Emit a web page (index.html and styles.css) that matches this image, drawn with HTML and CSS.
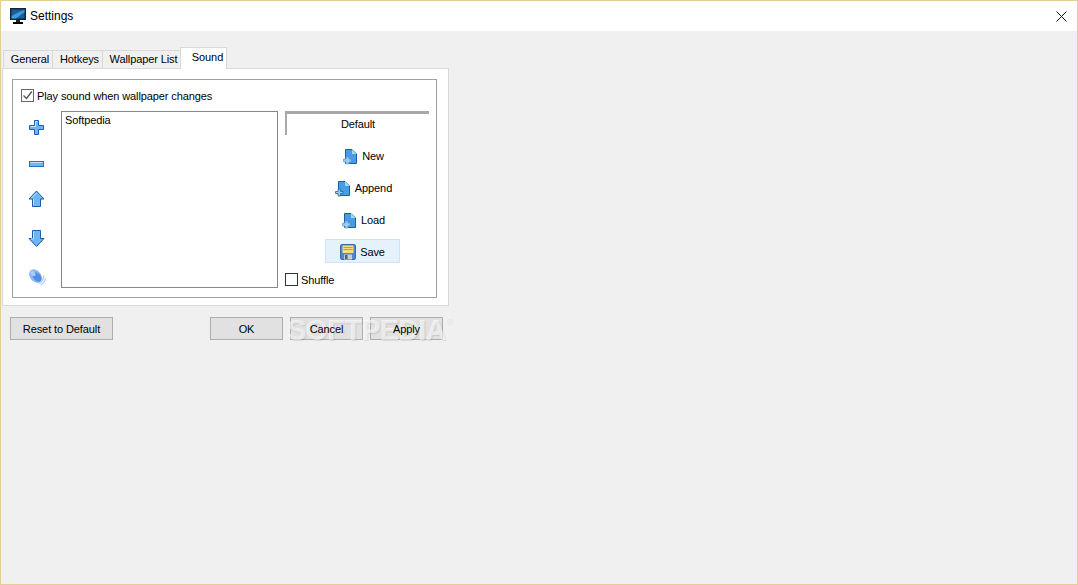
FILE: index.html
```html
<!DOCTYPE html>
<html lang="en">
<head>
<meta charset="utf-8">
<title>Settings</title>
<link rel="stylesheet" href="styles.css">
</head>
<body>
<div class="window">
  <header class="titlebar">
    <svg class="app-icon" width="16" height="16" viewBox="0 0 16 16">
      <rect x="0" y="0" width="16" height="12" fill="#12263e"/>
      <rect x="1.500" y="1.500" width="13" height="9" fill="#175f9c"/>
      <path d="M1.500 8 L9 4 L14.500 2 V4 L6 10.500 H1.500 Z" fill="#3f9bd8"/>
      <rect x="6" y="12" width="4" height="2" fill="#222"/>
      <rect x="3" y="14" width="10" height="2" fill="#000"/>
    </svg>
    <span class="title">Settings</span>
    <svg class="close" width="11" height="11" viewBox="0 0 11 11"><path d="M0.500 0.500 L10.500 10.500 M10.500 0.500 L0.500 10.500" stroke="#111" stroke-width="1" fill="none"/></svg>
  </header>
  <main class="content">
    <nav class="tabs">
      <div class="tab tab-general">General</div>
      <div class="tab tab-hotkeys">Hotkeys</div>
      <div class="tab tab-list">Wallpaper List</div>
      <div class="tab tab-sound">Sound</div>
    </nav>
    <section class="panel">
      <div class="group">
        <label class="check-row">
          <span class="box box-checked"><svg width="11" height="11" viewBox="0 0 11 11"><path d="M1.500 5.500 L4.500 8.500 L9.800 1.500" stroke="#555" stroke-width="1.400" fill="none"/></svg></span>
          <span>Play sound when wallpaper changes</span>
        </label>
        <div class="columns">
          <div class="side">
            <svg width="20" height="20" viewBox="0 0 20 20"><path d="M8.500 3.500 H12.500 V8.500 H17.500 V12.500 H12.500 V17.500 H8.500 V12.500 H3.500 V8.500 H8.500 Z" fill="#6db5f5" stroke="#1b5fa8"/><path d="M4.500 9.500 H9.500 V4.500 H11.500" stroke="#c4e2fc" fill="none"/></svg>
            <svg width="20" height="20" viewBox="0 0 20 20"><rect x="3.500" y="8.500" width="14" height="5" fill="#6db5f5" stroke="#2a70b8"/><path d="M4.500 9.500 H16.500" stroke="#c4e2fc"/></svg>
            <svg width="20" height="20" viewBox="0 0 20 20"><path d="M10.500 2 L18 10 H14.500 V17.500 H6.500 V10 H3 Z" fill="#6db5f5" stroke="#1b5fa8"/><path d="M10.500 4 L5.500 9 M7.500 10 V16" stroke="#c4e2fc" fill="none"/></svg>
            <svg class="gap-wide" width="20" height="20" viewBox="0 0 20 20"><path d="M10.500 18.500 L18 10.500 H14.500 V2.500 H6.500 V10.500 H3 Z" fill="#6db5f5" stroke="#1b5fa8"/><path d="M7.500 3.500 V11 H5" stroke="#c4e2fc" fill="none"/></svg>
            <svg class="gap-wide" width="20" height="20" viewBox="0 0 20 20">
              <ellipse cx="9.500" cy="9" rx="5.500" ry="7.500" fill="#8cb9f2" transform="rotate(-40 9.500 9)"/>
              <ellipse cx="11" cy="10" rx="3.600" ry="5.500" fill="#4f8ee2" transform="rotate(-40 11 10)"/>
              <ellipse cx="7" cy="6.500" rx="2" ry="3" fill="#a9cdf6" transform="rotate(-40 7 6.500)"/>
              <path d="M17.500 8.500 Q18.500 13.500 12.500 16.500 M19.500 11 Q19 15.500 14.500 18" stroke="#a8d0f8" stroke-width="1.200" fill="none"/>
            </svg>
          </div>
          <div class="list">Softpedia</div>
          <div class="right">
            <div class="preset">Default</div>
            <div class="action">
              <svg class="page-icon" width="14" height="15" viewBox="0 0 14 15"><path d="M2.500 0.500 H9 L13.500 5 V14.500 H2.500 Z" fill="#4a9be6" stroke="#1b5fa8"/><path d="M9 0.500 V5 H13.500 Z" fill="#9fe0e0"/><path d="M0.500 10 H3 V8 H6 V10 H8 V13 H6 V15 H3 V13 H0.500 Z" fill="#9cc8f2" stroke="#5a90c8" stroke-width=".6"/></svg>
              <span>New</span>
            </div>
            <div class="action">
              <svg class="page-icon" width="15" height="15" viewBox="0 0 15 15"><path d="M3.500 0.500 H10 L14.500 5 V14.500 H3.500 Z" fill="#4a9be6" stroke="#1b5fa8"/><path d="M10 0.500 V5 H14.500 Z" fill="#9fe0e0"/><path d="M0.500 10.500 H3 V8 H5.500 V10.500 H8 V12.500 H5.500 V15 H3 V12.500 H0.500 Z" fill="#9cc8f2" stroke="#1b5fa8" stroke-width=".8"/></svg>
              <span>Append</span>
            </div>
            <div class="action">
              <svg class="page-icon" width="14" height="15" viewBox="0 0 14 15"><path d="M2.500 0.500 H9 L13.500 5 V14.500 H2.500 Z" fill="#4a9be6" stroke="#1b5fa8"/><path d="M9 0.500 V5 H13.500 Z" fill="#9fe0e0"/><path d="M0.500 10 H3 V8 H6 V10 H8 V13 H6 V15 H3 V13 H0.500 Z" fill="#9cc8f2" stroke="#5a90c8" stroke-width=".6"/></svg>
              <span>Load</span>
            </div>
            <div class="action action-hover">
              <svg width="16" height="16" viewBox="0 0 16 16"><rect x="0.500" y="0.500" width="15" height="15" rx="1.500" fill="#4f86cc" stroke="#3a6cae"/><rect x="2.500" y="1.500" width="11" height="7.500" fill="#f7dc80"/><path d="M3.500 3.500 H12.500 M3.500 5.500 H12.500" stroke="#c89a44"/><rect x="4" y="10.500" width="8" height="5" fill="#c8ccd4"/><rect x="5" y="11" width="2.500" height="4" fill="#555e6e"/></svg>
              <span>Save</span>
            </div>
            <label class="check-row shuffle">
              <span class="box"></span>
              <span>Shuffle</span>
            </label>
          </div>
        </div>
      </div>
    </section>
    <footer class="buttons">
      <div class="btn btn-reset"><span class="btn-label">Reset to Default</span></div>
      <div class="btn btn-ok"><span class="btn-label">OK</span></div>
      <div class="btn"><span class="btn-label">Cancel</span></div>
      <div class="btn"><span class="btn-label">Apply</span></div>
      <div class="watermark">SOFTPEDIA<sup>®</sup></div>
    </footer>
  </main>
</div>
</body>
</html>
```

FILE: styles.css
```css
* { box-sizing: border-box; }
html, body { margin: 0; padding: 0; }
body {
  width: 1078px;
  height: 585px;
  overflow: hidden;
  font-family: "Liberation Sans", Arial, sans-serif;
  font-size: 11px;
  letter-spacing: -0.1px;
  color: #000;
}
.window {
  width: 1078px;
  height: 585px;
  border: 1px solid #e6cd95;
  background: #f0f0f0;
  display: flex;
  flex-direction: column;
}
.titlebar {
  height: 30px;
  background: #fff;
  display: flex;
  align-items: center;
  padding: 0 10px 0 9px;
  flex: none;
}
.app-icon { margin-right: 4px; }
.title { flex: 1; font-size: 12px; letter-spacing: 0; }
.content {
  flex: 1;
  padding: 17px 0 0 1px;
  position: relative;
}
.tabs {
  display: flex;
  align-items: flex-end;
  height: 20px;
  padding-left: 1px;
  position: relative;
}
.tab {
  height: 18px;
  background: #f0f0f0;
  border: 1px solid #d9d9d9;
  border-bottom: none;
  border-right: none;
  display: flex;
  align-items: center;
  justify-content: center;
  padding: 0 0 2px 4px;
}
.tab-general { width: 49px; }
.tab-hotkeys { width: 50px; }
.tab-list { width: 78px; }
.tab-sound {
  width: 47px;
  height: 22px;
  background: #fff;
  border-right: 1px solid #d9d9d9;
  padding: 0 0 4px 8px;
  margin-bottom: -1px;
  position: relative;
  z-index: 1;
}
.panel {
  width: 447px;
  height: 238px;
  background: #fff;
  border: 1px solid #d9d9d9;
  padding: 10px 11px 7px 9px;
}
.group {
  height: 219px;
  border: 1px solid #a0a0a0;
  padding: 9px 7px 9px 8px;
  display: flex;
  flex-direction: column;
}
.check-row {
  display: flex;
  align-items: center;
  gap: 3px;
  height: 13px;
}
.box {
  width: 13px;
  height: 13px;
  border: 1px solid #333;
  background: #fff;
  display: flex;
  align-items: center;
  justify-content: center;
  flex: none;
}
.box-checked { border-color: #666; }
.columns {
  display: flex;
  margin-top: 9px;
  height: 177px;
}
.side {
  width: 30px;
  margin-right: 10px;
  flex: none;
  display: flex;
  flex-direction: column;
  align-items: center;
  gap: 16px;
  padding-top: 6px;
}
.gap-wide { margin-top: 3px; }
.list {
  width: 217px;
  height: 177px;
  border: 1px solid #828790;
  padding: 2px 3px;
  flex: none;
}
.right {
  width: 144px;
  margin-left: 7px;
  flex: none;
  display: flex;
  flex-direction: column;
}
.preset {
  height: 24px;
  border-top: 3px solid #a8a8a8;
  border-left: 2px solid #a8a8a8;
  text-align: center;
  line-height: 20px;
  margin-bottom: 9px;
}
.action {
  width: 75px;
  height: 24px;
  margin-left: 40px;
  margin-bottom: 8px;
  display: flex;
  align-items: center;
  justify-content: center;
  gap: 5px;
  flex: none;
  padding-left: 2px;
}
.page-icon { overflow: visible; }
.action-hover {
  background: #e5f1fb;
  border: 1px solid #cce4f7;
  margin-top: -1px;
  margin-bottom: 10px;
  padding-top: 1px;
  gap: 4px;
  padding-left: 0;
}
.shuffle { margin: 0; }
.buttons {
  display: flex;
  gap: 7px;
  margin: 11px 0 0 8px;
  position: relative;
  width: 433px;
}
.btn {
  width: 73px;
  height: 23px;
  background: #e1e1e1;
  border: 1px solid #adadad;
  display: flex;
  align-items: center;
  justify-content: center;
}
.btn-label { position: relative; z-index: 2; }
.btn-reset { width: 103px; margin-right: 90px; }
.watermark {
  position: absolute;
  left: 277px;
  top: -4px;
  z-index: 1;
  font-size: 29px;
  font-weight: bold;
  letter-spacing: -0.8px;
  color: rgba(255, 255, 255, 0.6);
  text-shadow: 1px 1px 1px rgba(0, 0, 0, 0.1);
  line-height: 34px;
  white-space: nowrap;
  pointer-events: none;
}
.watermark sup { font-size: 9px; font-weight: normal; vertical-align: top; line-height: 16px; }
```
